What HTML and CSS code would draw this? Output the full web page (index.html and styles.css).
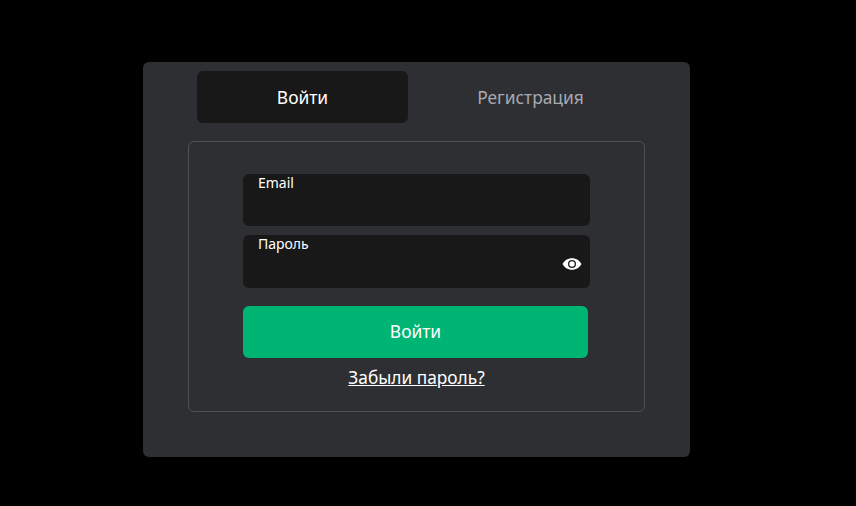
FILE: index.html
```html
<!DOCTYPE html>
<html lang="ru">
<head>
<meta charset="utf-8">
<title>Войти</title>
<link rel="stylesheet" href="styles.css">
</head>
<body>
<main class="card">
  <div class="tabs">
    <button class="tab tab-active">Войти</button>
    <button class="tab">Регистрация</button>
  </div>
  <form class="frame">
    <div class="field field-email"><span class="field-label">Email</span></div>
    <div class="field field-password">
      <span class="field-label">Пароль</span>
      <svg class="eye" viewBox="0 0 20 14" width="20" height="14" aria-hidden="true">
        <path fill="#fff" fill-rule="evenodd" d="M10 1.200C5.600 1.200 2.200 3.600.6 7c1.600 3.400 5 5.800 9.400 5.800s7.800-2.400 9.400-5.800C17.800 3.600 14.400 1.200 10 1.200Zm0 1.800a4 4 0 1 1 0 8 4 4 0 0 1 0-8Z"/>
        <circle fill="#fff" cx="10" cy="7" r="2.700"/>
      </svg>
    </div>
    <button class="submit" type="button">Войти</button>
    <a class="forgot" href="#">Забыли пароль?</a>
  </form>
</main>
</body>
</html>
```
FILE: styles.css
```css
* { box-sizing: border-box; }
html, body { height: 100%; }
body {
  margin: 0;
  background: #000;
  font-family: "Noto Sans", "Open Sans", sans-serif;
  color: #fff;
  padding: 62px 0 0 143px;
}
.card {
  width: 547px;
  height: 395px;
  background: #2e2f33;
  border-radius: 6px;
  padding: 9px 45px 0;
}
.tabs {
  display: flex;
  gap: 17px;
  padding-left: 9px;
}
.tab {
  width: 211px;
  height: 52px;
  border: 0;
  border-radius: 6px;
  background: transparent;
  color: #a8a9b2;
  font: inherit;
  font-size: 17.4px;
}
.tab-active {
  background: #181818;
  color: #fff;
}
.frame {
  width: 457px;
  height: 271px;
  margin-top: 18px;
  border: 1px solid #505155;
  border-radius: 6px;
  padding: 32px 54px 0;
  display: flex;
  flex-direction: column;
  align-items: flex-start;
}
.field {
  position: relative;
  width: 347px;
  background: #181818;
  border-radius: 6px;
  padding: 0 15px;
  font-size: 14px;
  line-height: 18px;
}
.field-email { height: 52px; }
.field-password { height: 53px; margin-top: 9px; display: flex; }
.eye {
  position: absolute;
  right: 8px;
  top: 22px;
}
.submit {
  width: 345px;
  height: 52px;
  margin-top: 18px;
  padding: 0 0 2px;
  border: 0;
  border-radius: 6px;
  background: #00b574;
  color: #fff;
  font: inherit;
  font-size: 17.4px;
}
.forgot {
  align-self: center;
  margin: 9px 0 0;
  color: #fff;
  font-size: 17.3px;
  line-height: 22px;
  text-decoration: underline;
}
```
